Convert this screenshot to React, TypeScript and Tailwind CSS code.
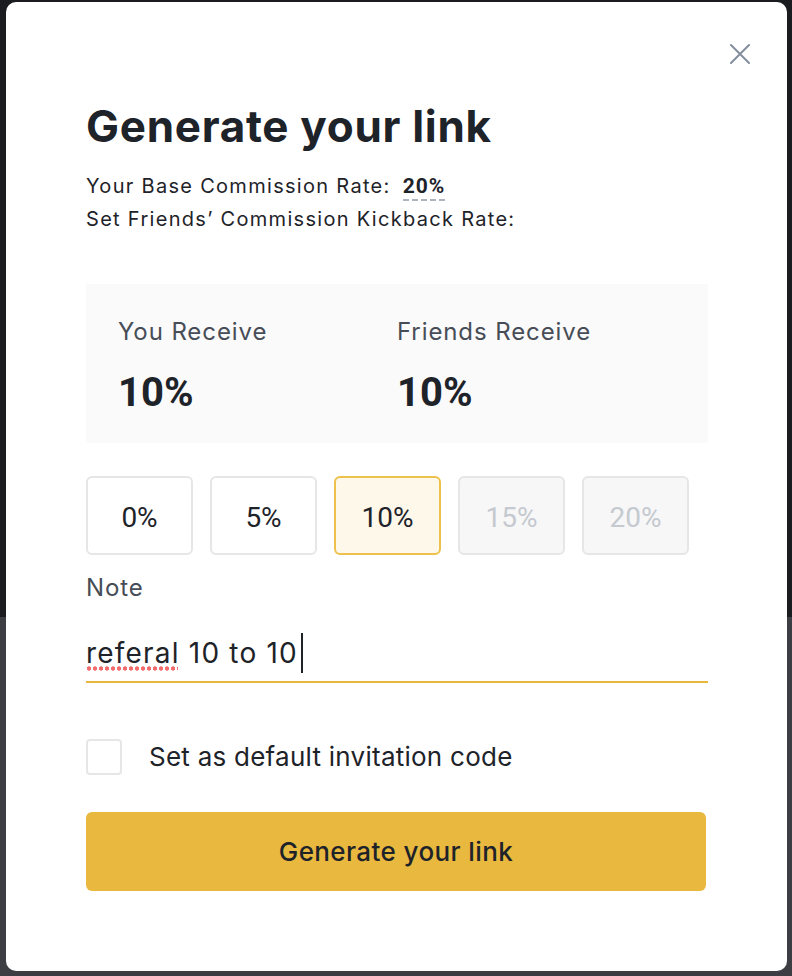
import { useState } from "react";

const rates = [
  { label: "0%", disabled: false },
  { label: "5%", disabled: false },
  { label: "10%", disabled: false },
  { label: "15%", disabled: true },
  { label: "20%", disabled: true },
];

function CloseIcon() {
  return (
    <svg width="22" height="22" viewBox="0 0 22 22" fill="none">
      <path d="M2 2L20 20M20 2L2 20" stroke="#848e9c" strokeWidth="2" strokeLinecap="round" />
    </svg>
  );
}

export default function App() {
  const [selected, setSelected] = useState("10%");
  const [checked, setChecked] = useState(false);

  return (
    <div className="relative h-[976px] w-[792px] overflow-hidden font-['Inter',sans-serif]">
      {/* backdrop */}
      <div className="flex h-full flex-col">
        <div className="h-[617px] bg-[#1b1c20]" />
        <div className="flex-grow bg-[#3d3e43]" />
      </div>

      {/* modal */}
      <div className="absolute left-[6px] top-[2px] flex h-[969px] w-[781px] flex-col rounded-[10px] bg-white pl-[80px] pr-[79px] pt-[97px] text-[#1e2329]">
        <button className="absolute right-[36px] top-[41px]">
          <CloseIcon />
        </button>

        <h1 className="text-[44px] font-bold leading-[54px] tracking-[0.7px]">Generate your link</h1>

        <div className="mt-[17px] text-[20px] leading-[33px] tracking-[1.3px]">
          <div className="flex items-center">
            <span>Your Base Commission Rate:</span>
            <span className="ml-[12px] border-b-2 border-dashed border-[#aeb4bc] font-['Roboto',sans-serif] text-[21px] font-bold leading-[26px] tracking-[1px]">
              20%
            </span>
          </div>
          <div>Set Friends’ Commission Kickback Rate:</div>
        </div>

        <div className="mt-[48px] flex h-[159px] bg-[#fafafa] px-[32px] pt-[30px]">
          <div className="w-[279px]">
            <div className="text-[24px] leading-[36px] tracking-[0.9px] text-[#474d57]">You Receive</div>
            <div className="mt-[19px] font-['Roboto',sans-serif] text-[40px] font-bold leading-[48px]">10%</div>
          </div>
          <div>
            <div className="text-[24px] leading-[36px] tracking-[0.9px] text-[#474d57]">Friends Receive</div>
            <div className="mt-[19px] font-['Roboto',sans-serif] text-[40px] font-bold leading-[48px]">10%</div>
          </div>
        </div>

        <div className="mt-[33px] flex gap-[17px]">
          {rates.map((r) => {
            const active = selected === r.label;
            return (
              <button
                key={r.label}
                disabled={r.disabled}
                onClick={() => setSelected(r.label)}
                className={`flex h-[79px] w-[107px] items-center justify-center rounded-[6px] border-2 pt-[5px] font-['Roboto',sans-serif] text-[28px] ${
                  active
                    ? "border-[#edc14b] bg-[#fdf8ea] text-[#1e2329]"
                    : r.disabled
                      ? "border-[#e6e6e6] bg-[#f7f7f7] text-[#c5c9d0]"
                      : "border-[#e6e6e6] bg-white text-[#1e2329]"
                }`}
              >
                {r.label}
              </button>
            );
          })}
        </div>

        <div className="mt-[16px] text-[24px] leading-[34px] tracking-[0.9px] text-[#474d57]">Note</div>

        <div className="mt-[26px] flex h-[52px] items-center border-b-2 border-[#e8b83a] pb-[6px] text-[28px] leading-[40px] tracking-[1.2px]">
          <span className="relative inline-block leading-[40px]">
            referal
            <span className="absolute left-0 right-[2px] top-[33px] h-[5px] bg-[radial-gradient(circle,#f26d6d_1.9px,transparent_2.4px)] bg-[length:6px_5px] bg-repeat-x" />
          </span>
          <span>&nbsp;10 to 10</span>
          <span className="ml-[3px] h-[40px] w-[2px] bg-[#1e2329]" />
        </div>

        <label className="mt-[56px] flex items-center gap-[27px]">
          <input
            type="checkbox"
            checked={checked}
            onChange={() => setChecked(!checked)}
            className="h-[36px] w-[36px] appearance-none rounded-[4px] border-2 border-[#e6e6e6] bg-white"
          />
          <span className="text-[26px] leading-[36px] tracking-[0.25px]">Set as default invitation code</span>
        </label>

        <button className="mt-[37px] h-[79px] w-[620px] rounded-[6px] bg-[#e8b83f] text-[26px] font-medium tracking-[0.4px] text-[#1e2329]">
          Generate your link
        </button>
      </div>
    </div>
  );
}
